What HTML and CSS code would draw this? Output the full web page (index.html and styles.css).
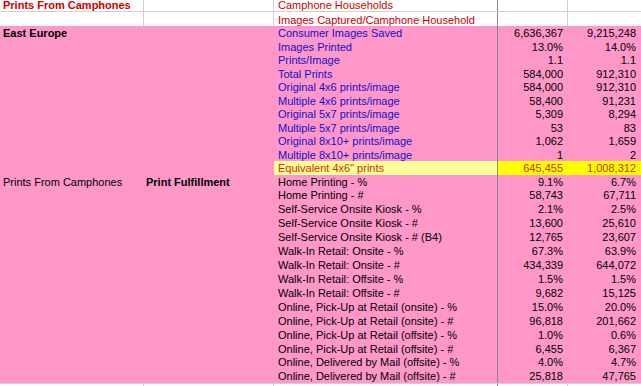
FILE: index.html
```html
<!DOCTYPE html>
<html>
<head>
<meta charset="utf-8">
<link rel="stylesheet" href="styles.css">
</head>
<body>
<div class="sheet">
  <div class="row r-top1">
    <div class="c a bold red">Prints From Camphones</div><div class="c b"></div><div class="c cc red">Camphone Households</div><div class="c d"></div><div class="c e"></div>
  </div>
  <div class="row r-top2">
    <div class="c a"></div><div class="c b"></div><div class="c cc red">Images Captured/Camphone Household</div><div class="c d"></div><div class="c e"></div>
  </div>
  <div class="pink">
    <div class="row r1"><div class="c a bold">East Europe</div><div class="c b"></div><div class="c cc blue">Consumer Images Saved</div><div class="c d num">6,636,367</div><div class="c e num">9,215,248</div></div>
    <div class="row r1"><div class="c a"></div><div class="c b"></div><div class="c cc blue">Images Printed</div><div class="c d num">13.0%</div><div class="c e num">14.0%</div></div>
    <div class="row r1"><div class="c a"></div><div class="c b"></div><div class="c cc blue">Prints/Image</div><div class="c d num">1.1</div><div class="c e num">1.1</div></div>
    <div class="row r1"><div class="c a"></div><div class="c b"></div><div class="c cc blue">Total Prints</div><div class="c d num">584,000</div><div class="c e num">912,310</div></div>
    <div class="row r1"><div class="c a"></div><div class="c b"></div><div class="c cc blue">Original 4x6 prints/image</div><div class="c d num">584,000</div><div class="c e num">912,310</div></div>
    <div class="row r1"><div class="c a"></div><div class="c b"></div><div class="c cc blue">Multiple 4x6 prints/image</div><div class="c d num">58,400</div><div class="c e num">91,231</div></div>
    <div class="row r1"><div class="c a"></div><div class="c b"></div><div class="c cc blue">Original 5x7 prints/image</div><div class="c d num">5,309</div><div class="c e num">8,294</div></div>
    <div class="row r1"><div class="c a"></div><div class="c b"></div><div class="c cc blue">Multiple 5x7 prints/image</div><div class="c d num">53</div><div class="c e num">83</div></div>
    <div class="row r1"><div class="c a"></div><div class="c b"></div><div class="c cc blue">Original 8x10+ prints/image</div><div class="c d num">1,062</div><div class="c e num">1,659</div></div>
    <div class="row r1"><div class="c a"></div><div class="c b"></div><div class="c cc blue">Multiple 8x10+ prints/image</div><div class="c d num">1</div><div class="c e num">2</div></div>
    <div class="row r1 eq"><div class="c a"></div><div class="c b"></div><div class="c cc orange lightyellow">Equivalent 4x6" prints</div><div class="c d num orange yellow">645,455</div><div class="c e num orange yellow">1,008,312</div></div>
    <div class="row r2"><div class="c a">Prints From Camphones</div><div class="c b bold">Print Fulfillment</div><div class="c cc">Home Printing - %</div><div class="c d num">9.1%</div><div class="c e num">6.7%</div></div>
    <div class="row r2"><div class="c a"></div><div class="c b"></div><div class="c cc">Home Printing - #</div><div class="c d num">58,743</div><div class="c e num">67,711</div></div>
    <div class="row r2"><div class="c a"></div><div class="c b"></div><div class="c cc">Self-Service Onsite Kiosk - %</div><div class="c d num">2.1%</div><div class="c e num">2.5%</div></div>
    <div class="row r2"><div class="c a"></div><div class="c b"></div><div class="c cc">Self-Service Onsite Kiosk - #</div><div class="c d num">13,600</div><div class="c e num">25,610</div></div>
    <div class="row r2"><div class="c a"></div><div class="c b"></div><div class="c cc">Self-Service Onsite Kiosk - # (B4)</div><div class="c d num">12,765</div><div class="c e num">23,607</div></div>
    <div class="row r2"><div class="c a"></div><div class="c b"></div><div class="c cc">Walk-In Retail: Onsite - %</div><div class="c d num">67.3%</div><div class="c e num">63.9%</div></div>
    <div class="row r2"><div class="c a"></div><div class="c b"></div><div class="c cc">Walk-In Retail: Onsite - #</div><div class="c d num">434,339</div><div class="c e num">644,072</div></div>
    <div class="row r2"><div class="c a"></div><div class="c b"></div><div class="c cc">Walk-In Retail: Offsite - %</div><div class="c d num">1.5%</div><div class="c e num">1.5%</div></div>
    <div class="row r2"><div class="c a"></div><div class="c b"></div><div class="c cc">Walk-In Retail: Offsite - #</div><div class="c d num">9,682</div><div class="c e num">15,125</div></div>
    <div class="row r2"><div class="c a"></div><div class="c b"></div><div class="c cc">Online, Pick-Up at Retail (onsite) - %</div><div class="c d num">15.0%</div><div class="c e num">20.0%</div></div>
    <div class="row r2"><div class="c a"></div><div class="c b"></div><div class="c cc">Online, Pick-Up at Retail (onsite) - #</div><div class="c d num">96,818</div><div class="c e num">201,662</div></div>
    <div class="row r2"><div class="c a"></div><div class="c b"></div><div class="c cc">Online, Pick-Up at Retail (offsite) - %</div><div class="c d num">1.0%</div><div class="c e num">0.6%</div></div>
    <div class="row r2"><div class="c a"></div><div class="c b"></div><div class="c cc">Online, Pick-Up at Retail (offsite) - #</div><div class="c d num">6,455</div><div class="c e num">6,367</div></div>
    <div class="row r2"><div class="c a"></div><div class="c b"></div><div class="c cc">Online, Delivered by Mail (offsite) - %</div><div class="c d num">4.0%</div><div class="c e num">4.7%</div></div>
    <div class="row r2"><div class="c a"></div><div class="c b"></div><div class="c cc">Online, Delivered by Mail (offsite) - #</div><div class="c d num">25,818</div><div class="c e num">47,765</div></div>
  </div>
  <div class="row r-bottom">
    <div class="c a"></div><div class="c b"></div><div class="c cc"></div><div class="c d"></div><div class="c e"></div>
  </div>
</div>
</body>
</html>
```

FILE: styles.css
```css
html, body {
  margin: 0;
  padding: 0;
  background: #ffffff;
}
body {
  width: 641px;
  height: 386px;
  overflow: hidden;
  font-family: "Liberation Sans", Arial, sans-serif;
  font-size: 11px;
  color: #000000;
}
.sheet {
  display: flex;
  flex-direction: column;
  width: 641px;
}
.row {
  display: grid;
  grid-template-columns: 144px 130px 224px 70px 73px;
  box-sizing: border-box;
}
.c {
  box-sizing: border-box;
  padding: 0 3px;
  white-space: nowrap;
  overflow: visible;
}
.r-top1 {
  height: 12px;
  border-bottom: 1px solid #d0d0d0;
}
.r-top1 .c { line-height: 12px; margin-top: -1px; }
.r-top2 {
  height: 14px;
  line-height: 14px;
}
.r-top2 .c { padding-top: 1px; }
.r-top1 .c, .r-top2 .c, .r-bottom .c {
  border-right: 1px solid #d0d0d0;
}
.r-top1 .cc, .r-top2 .cc, .r-bottom .cc {
  border-right: 1px solid #8a8a8a;
}
.r-top1 .e, .r-top2 .e, .r-bottom .e { border-right: none; }
.r-top1 .cc, .r-top2 .cc { padding-left: 4px; }
.pink {
  background: #ff97c9;
  display: flex;
  flex-direction: column;
}
.pink .c { padding-top: 1px; }
.pink .cc {
  border-right: 1px solid #8a8a8a;
  padding-left: 4px;
}
.r1 {
  height: 13.5px;
  line-height: 13px;
}
.r2 {
  height: 13.93px;
  line-height: 13.4px;
}
.r-bottom {
  height: 4px;
  border-top: 1px solid #d0d0d0;
}
.num {
  text-align: right;
  padding-right: 5px;
}
.bold { font-weight: bold; }
.red { color: #cc0000; }
.blue { color: #1010cc; }
.orange { color: #cc3300; }
.yellow { background: #ffff00; }
.lightyellow { background: #ffff99; }
.a { padding-left: 3px; }
.b { padding-left: 2px; }
```
